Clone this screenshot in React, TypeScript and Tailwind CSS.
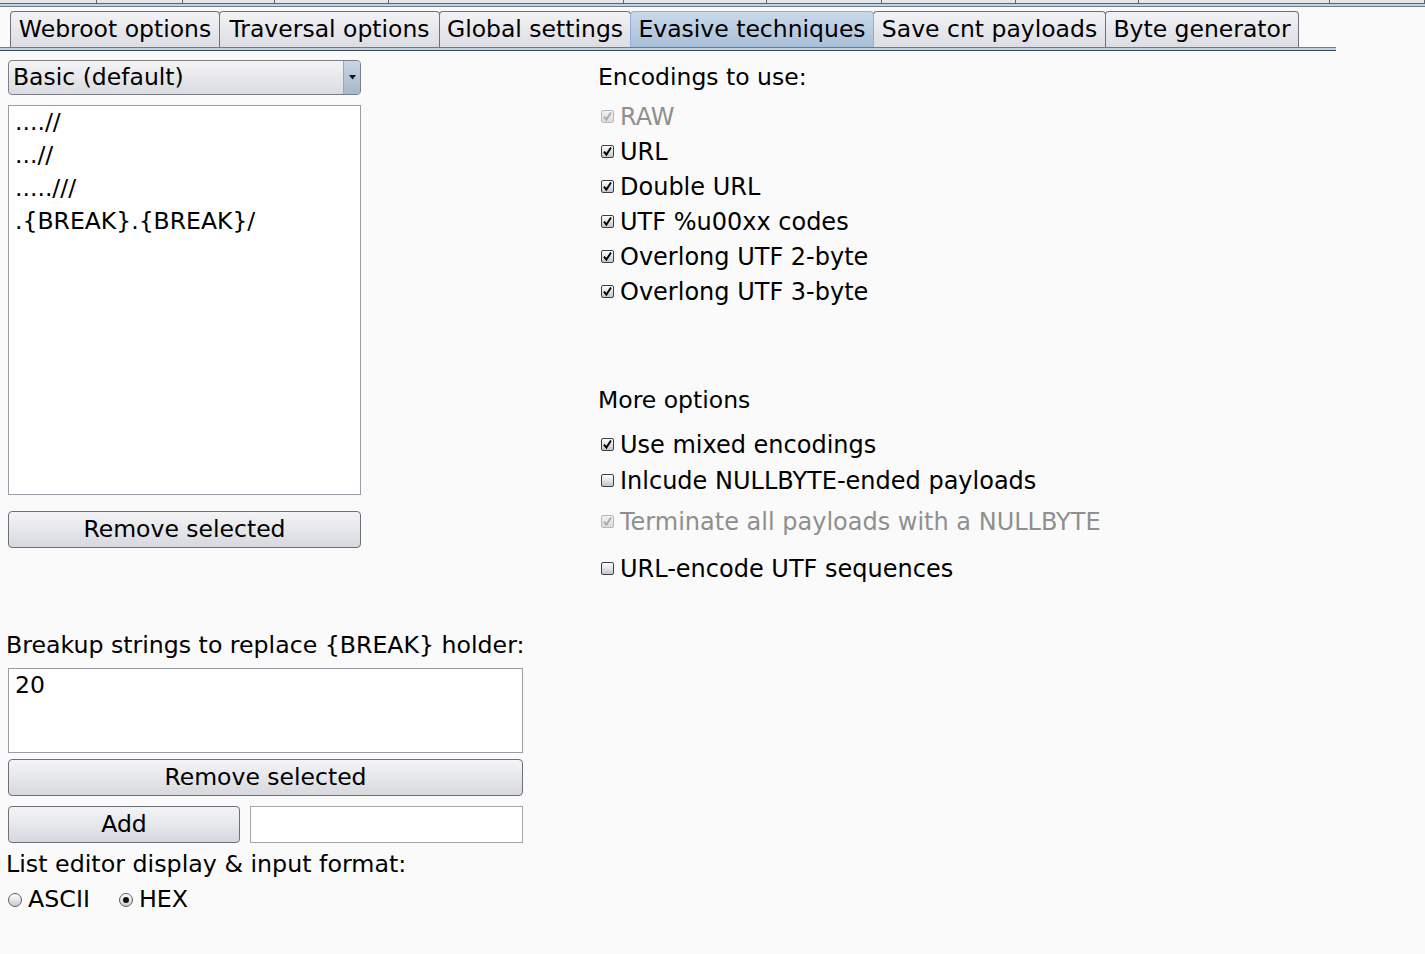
import React from "react";

const font = { fontFamily: '"DejaVu Sans", "Liberation Sans", sans-serif' };

function Tab({ label, selected, w }: { label: string; selected?: boolean; w: number }) {
  return (
    <div
      style={{ width: w }}
      className={
        "h-[36px] flex items-center justify-center text-[23.5px] leading-none border border-b-0 rounded-t-[4px] -mr-px whitespace-nowrap " +
        (selected
          ? "bg-gradient-to-b from-[#c9d9ea] to-[#a9bfd8] border-[#8fb0d3] relative z-10"
          : "bg-gradient-to-b from-[#f3f3f5] to-[#dcdde3] border-[#6e737b]")
      }
    >
      <span className="text-black">{label}</span>
    </div>
  );
}

function Check({ checked, disabled, label }: { checked?: boolean; disabled?: boolean; label: string }) {
  return (
    <div className="h-[35px] flex items-center">
      <div
        className={
          "ml-[3px] w-[13px] h-[13px] rounded-[2px] border flex items-center justify-center " +
          (disabled
            ? "border-[#b8b8bc] bg-gradient-to-b from-[#f2f2f4] to-[#dcdce0]"
            : "border-[#3c3f45] bg-gradient-to-b from-[#ffffff] to-[#c3c7cf]")
        }
      >
        {checked && (
          <svg width="11" height="11" viewBox="0 0 11 11">
            <path
              d="M2 5.6 L4.4 8.6 L9 1.6"
              fill="none"
              stroke={disabled ? "#a9a9ad" : "#000"}
              strokeWidth="1.9"
            />
          </svg>
        )}
      </div>
      <span className={"ml-[6px] text-[24px] whitespace-nowrap " + (disabled ? "text-[#8f8f8f]" : "text-black")}>{label}</span>
    </div>
  );
}

function Button({ label, className }: { label: string; className?: string }) {
  return (
    <div
      className={
        "h-[37px] flex items-center justify-center rounded-[4px] border border-[#6b6f76] bg-gradient-to-b from-[#f4f4f6] via-[#e6e7eb] to-[#d6d8de] text-[23.5px] text-black " +
        (className || "")
      }
    >
      {label}
    </div>
  );
}

function Radio({ selected, label }: { selected?: boolean; label: string }) {
  return (
    <div className="flex items-center">
      <div className="w-[14px] h-[14px] rounded-full border border-[#5a5d63] bg-gradient-to-b from-[#ffffff] to-[#c8cbd2] flex items-center justify-center">
        {selected && <div className="w-[6px] h-[6px] rounded-full bg-[#111]" />}
      </div>
      <span className="ml-[6px] text-[23.75px] text-black">{label}</span>
    </div>
  );
}

export default function App() {
  const tabsTop = [97, 86, 92, 114, 235, 143, 115, 134, 123, 191, 95];
  return (
    <div className="w-[1425px] h-[954px] bg-[#fafafa] overflow-hidden" style={font}>
      {/* cut-off upper tab row */}
      <div className="flex h-[4px] bg-[#e4e5e9] border-b border-[#5f6670]">
        {tabsTop.map((w, i) => (
          <div key={i} className="h-full border-r border-[#5f6670]" style={{ width: w }} />
        ))}
      </div>
      <div className="h-[2px] bg-[#bfd2e6]" />
      <div className="h-px bg-[#6d7c8c]" />
      {/* tab strip */}
      <div className="w-[1336px]">
        <div className="flex items-end pl-[10px] pt-[4px]">
          <Tab label="Webroot options" w={210} />
          <Tab label="Traversal options" w={221} />
          <Tab label="Global settings" w={192} />
          <Tab label="Evasive techniques" selected w={244} />
          <Tab label="Save cnt payloads" w={233} />
          <Tab label="Byte generator" w={194} />
        </div>
        <div className="h-px bg-[#6d7c8c]" />
        <div className="h-[2px] bg-[#bfd2e6]" />
        <div className="h-px bg-[#3f4a57]" />
      </div>

      <div className="flex mt-[9px]">
        {/* left column */}
        <div className="ml-[8px] w-[514px] flex flex-col">
          <div className="w-[353px] h-[35px] flex rounded-[4px] border border-[#7b8088] bg-gradient-to-b from-[#f4f4f6] to-[#dadbe0] overflow-hidden">
            <div className="flex-1 flex items-center pl-[4px] text-[23.5px] text-black">Basic (default)</div>
            <div className="w-[17px] border-l border-[#9aa9ba] bg-gradient-to-b from-[#c7d5e4] to-[#a6b8cc] flex items-center justify-center">
              <svg width="7" height="5" viewBox="0 0 7 5">
                <path d="M0 0 H7 L3.5 4.5 Z" fill="#111" />
              </svg>
            </div>
          </div>
          <div className="mt-[10px] w-[353px] h-[390px] border border-[#9a9ca6] bg-white pl-[6px] text-[23.5px] text-black">
            <div className="h-[33px] flex items-center">....//</div>
            <div className="h-[33px] flex items-center">...//</div>
            <div className="h-[33px] flex items-center">.....///</div>
            <div className="h-[33px] flex items-center">.{"{BREAK}"}.{"{BREAK}"}/</div>
          </div>
          <Button label="Remove selected" className="mt-[16px] w-[353px] h-[37px]" />

          <div className="mt-[83px] -ml-[2px] h-[30px] flex items-center text-[23.65px] text-black whitespace-nowrap">
            Breakup strings to replace {"{BREAK}"} holder:
          </div>
          <div className="mt-[7px] w-[515px] h-[85px] border border-[#9a9ca6] bg-white pl-[6px] text-[23.5px] text-black">
            <div className="h-[33px] flex items-center">20</div>
          </div>
          <Button label="Remove selected" className="mt-[6px] w-[515px]" />
          <div className="mt-[10px] flex w-[515px]">
            <Button label="Add" className="w-[232px]" />
            <div className="ml-[10px] flex-1 h-[37px] border border-[#a3a5ad] bg-white" />
          </div>
          <div className="mt-[7px] -ml-[2px] h-[30px] flex items-center text-[23.75px] text-black whitespace-nowrap">
            List editor display &amp; input format:
          </div>
          <div className="mt-[5px] flex items-center h-[30px]">
            <Radio label="ASCII" />
            <div className="ml-[29px]">
              <Radio label="HEX" selected />
            </div>
          </div>
        </div>

        {/* right column */}
        <div className="ml-[76px] flex flex-col">
          <div className="h-[35px] flex items-center text-[23.5px] text-black">Encodings to use:</div>
          <div className="mt-[4px]">
            <Check checked disabled label="RAW" />
            <Check checked label="URL" />
            <Check checked label="Double URL" />
            <Check checked label="UTF %u00xx codes" />
            <Check checked label="Overlong UTF 2-byte" />
            <Check checked label="Overlong UTF 3-byte" />
          </div>
          <div className="mt-[74px] h-[35px] flex items-center text-[23.5px] text-black">More options</div>
          <div className="mt-[9px]">
            <Check checked label="Use mixed encodings" />
          </div>
          <div className="mt-[1px]">
            <Check label="Inlcude NULLBYTE-ended payloads" />
          </div>
          <div className="mt-[6px]">
            <Check checked disabled label="Terminate all payloads with a NULLBYTE" />
          </div>
          <div className="mt-[12px]">
            <Check label="URL-encode UTF sequences" />
          </div>
        </div>
      </div>
    </div>
  );
}
